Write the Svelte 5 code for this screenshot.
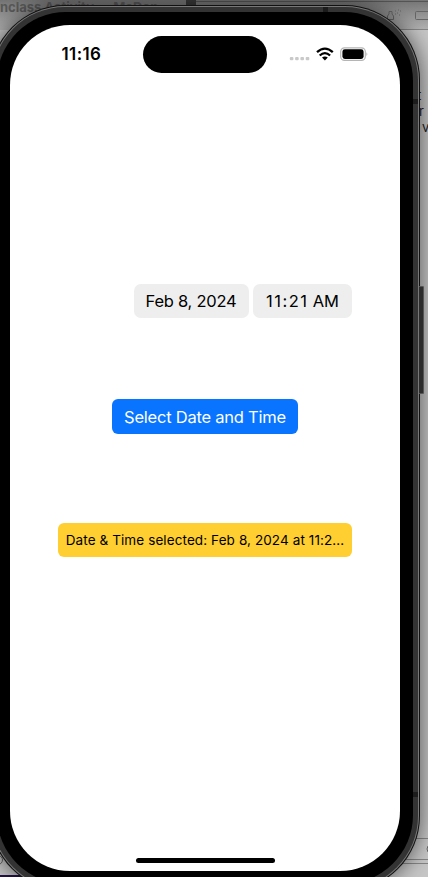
<script>
  const date = 'Feb 8, 2024';
  const clock = '11:21';
  const period = 'AM';
</script>

<div class="desktop">
  <div class="titlebar"><span>nclass Activity — McDon</span></div>
  <div class="tab"></div>
  <svg class="backdrop" width="428" height="877" viewBox="0 0 428 877">
    <path d="M196 1.500H428" stroke="#555" fill="none" />
    <path d="M380 29.5H428M412 838.5H428M400 859.5H428M394 863.5H428" stroke="#858585" fill="none" />
    <g fill="none" stroke="#666">
      <path d="M387.5 19.5v-3.500l1.500-2v-2.500h3v2.500l1.500 2v3.500z" />
      <path d="M395 11h1M398 10h1M397 13h1M400 11h1M399 15h1M395 14h1" />
      <rect x="415.500" y="11.500" width="15" height="8" rx="1" />
      <circle cx="-2" cy="860" r="4.500" />
      <circle cx="431" cy="849" r="4" />
    </g>
    <g fill="#222" font-family="Inter, sans-serif" font-size="13">
      <text x="417" y="100">t</text>
      <text x="419" y="116">r</text>
      <text x="422" y="132">v</text>
    </g>
    <rect x="0" y="875" width="30" height="2" fill="#25124a" />
  </svg>
  <div class="side-button"></div>

  <div class="frame">
    <div class="rim">
      <div class="band">
        <div class="bezel">
          <main class="screen">
            <header>
              <time>11:16</time>
              <div class="island"></div>
              <svg class="status" width="80" height="16" viewBox="0 0 80 16">
                <g fill="#c9c9cb">
                  <rect x=".8" y="11" width="3.600" height="3.200" rx="1" />
                  <rect x="6.100" y="11" width="3.600" height="3.200" rx="1" />
                  <rect x="11.400" y="11" width="3.600" height="3.200" rx="1" />
                  <rect x="16.700" y="11" width="3.600" height="3.200" rx="1" />
                </g>
                <g fill="none" stroke="#000" stroke-width="2.300">
                  <path d="M28 6.200Q35.900-1 43.800 6.200" />
                  <path d="M30.700 9.500Q35.900 4.700 41.100 9.500" />
                </g>
                <path d="M33 11.600Q35.900 9.300 38.800 11.600L35.900 14.400Z" />
                <rect x="51.700" y="1.800" width="24.600" height="12.600" rx="3.800" fill="none" stroke="#b5b5b5" stroke-width="1.200" />
                <rect x="53.400" y="3.300" width="21.200" height="9.600" rx="2.400" />
                <path d="M77.400 6.200q2 1.900 0 3.800z" fill="#b5b5b5" />
              </svg>
            </header>
            <div class="picker">
              <button class="date"><span>{date}</span></button>
              <button class="hour"><span><b>{clock}</b> {period}</span></button>
            </div>
            <button class="select"><span>Select Date and Time</span></button>
            <div class="result"><span>Date &amp; Time selected: {date} at 11:2...</span></div>
            <div class="home"></div>
          </main>
        </div>
      </div>
    </div>
  </div>
  <i class="seam top"></i>
  <i class="seam upper"></i>
  <i class="seam lower"></i>
</div>

<style>
  :global(body) { margin: 0; }
  .desktop {
    position: relative;
    width: 428px;
    height: 877px;
    overflow: hidden;
    background: #c6c6c6;
    font-family: Inter, "Liberation Sans", sans-serif;
    color: #000;
  }
  .titlebar {
    height: 30px;
    background: linear-gradient(#747474, #b4b4b4);
    font-size: 13px;
    line-height: 14px;
    font-weight: 700;
    color: #5a5a5a;
    white-space: nowrap;
  }
  .tab {
    position: absolute;
    left: 186px;
    top: 0;
    width: 10px;
    height: 6px;
    background: #3a3a3a;
  }
  .backdrop { position: absolute; inset: 0; }
  .side-button {
    position: absolute;
    left: 416px;
    top: 286px;
    width: 8px;
    height: 108px;
    box-sizing: border-box;
    border: 1px solid #555;
    border-radius: 1px;
    background: #2c2c2c;
    z-index: 1;
    clip-path: inset(0 0 0 3px);
  }
  .frame {
    position: absolute;
    left: -10px;
    top: 5px;
    width: 430px;
    height: 886px;
    box-sizing: border-box;
    padding: 1px;
    border-radius: 75px;
    background: #111;
    box-shadow: 0 0 22px rgba(0, 0, 0, .6);
  }
  .rim, .band, .bezel { height: 100%; box-sizing: border-box; }
  .rim { padding: 1px; border-radius: 74px; background: #777; }
  .band { padding: 5px; border-radius: 73px; background: #333; }
  .bezel { padding: 13px; border-radius: 69px; background: #000; }
  .screen {
    height: 846px;
    width: 390px;
    border-radius: 60px;
    background: #fff;
    display: flex;
    flex-direction: column;
    box-sizing: border-box;
    padding: 11px 0 8px;
  }
  header { display: flex; height: 37px; align-items: center; }
  header time {
    width: 81.500px;
    padding: 0 0 2px 51.500px;
    font-size: 17px;
    font-weight: 600;
    letter-spacing: .4px;
  }
  .island { width: 124px; height: 37px; border-radius: 19px; background: #000; flex: none; }
  .status { margin-left: 22px; margin-top: -1px; flex: none; }
  button {
    border: 0;
    padding: 0;
    font: inherit;
    color: inherit;
    display: flex;
    align-items: center;
    justify-content: center;
    white-space: nowrap;
  }
  .picker { display: flex; gap: 4px; margin: 210.500px 0 0 123.500px; font-size: 16.500px; }
  .picker button { height: 34.500px; border-radius: 7px; background: #eee; }
  .picker span { position: relative; top: .5px; }
  .date { width: 115px; letter-spacing: -.25px; }
  .hour { width: 99px; letter-spacing: 0; padding-left: 1px; }
  .hour b { font-weight: 400; letter-spacing: 1.500px; margin-right: -.5px; }
  .select {
    width: 186px;
    height: 35px;
    margin: 81px 0 0 102px;
    border-radius: 6px;
    background: #0874ff;
    color: #fff;
    font-size: 16.500px;
    letter-spacing: -.23px;
  }
  .result {
    display: flex;
    align-items: center;
    justify-content: center;
    width: 294px;
    height: 34px;
    margin: 89px 0 0 48px;
    border-radius: 6px;
    background: #ffce31;
    font-size: 13.500px;
    letter-spacing: .1px;
    white-space: nowrap;
  }
  .home {
    width: 139px;
    height: 5px;
    margin: auto 0 0 126px;
    border-radius: 3px;
    background: #000;
  }
  .seam { position: absolute; background: #1c1c1c; width: 5px; height: 5px; }
  .seam.top { left: 323px; top: 7px; }
  .seam.upper { left: 413px; top: 99px; }
  .seam.lower { left: 413px; top: 792px; }
</style>
